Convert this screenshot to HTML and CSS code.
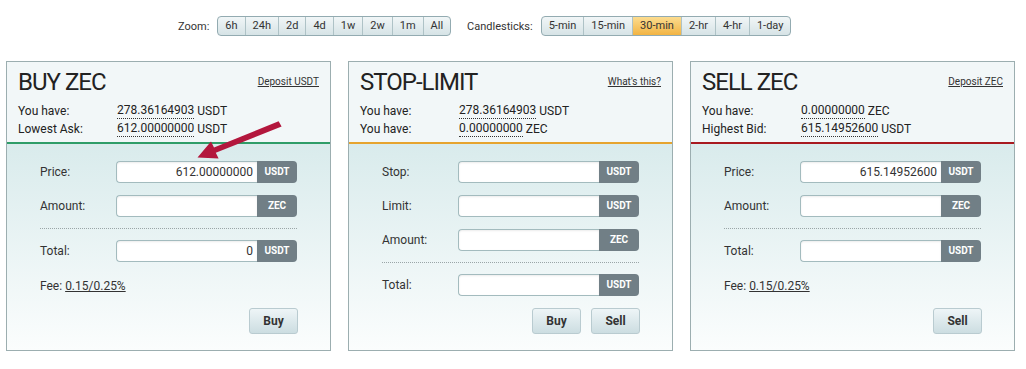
FILE: index.html
```html
<!doctype html>
<html lang="en">
<head>
  <meta charset="UTF-8">
  <title>Trade ZEC</title>
  <link rel="stylesheet" href="styles.css">
</head>
<body>
  <div class="toolbar">
    <span class="tb-label">Zoom:</span>
    <ul class="btn-group">
      <li>6h</li><li>24h</li><li>2d</li><li>4d</li><li>1w</li><li>2w</li><li>1m</li><li>All</li>
    </ul>
    <span class="tb-label">Candlesticks:</span>
    <ul class="btn-group">
      <li>5-min</li><li>15-min</li><li class="on">30-min</li><li>2-hr</li><li>4-hr</li><li>1-day</li>
    </ul>
  </div>

  <div class="panels">
    <!-- buy -->
    <div class="panel">
      <div class="head buy">
        <div class="title-row">
          <h2>BUY ZEC</h2>
          <a href="#">Deposit USDT</a>
        </div>
        <div class="info"><span class="lbl">You have:</span><span class="val">278.36164903</span>&nbsp;USDT</div>
        <div class="info"><span class="lbl">Lowest Ask:</span><span class="val">612.00000000</span>&nbsp;USDT</div>
      </div>
      <div class="body">
        <div class="row"><label>Price:</label><div class="field"><input type="text" value="612.00000000"><span class="unit">USDT</span></div></div>
        <div class="row"><label>Amount:</label><div class="field"><input type="text" value=""><span class="unit">ZEC</span></div></div>
        <div class="sep"></div>
        <div class="row"><label>Total:</label><div class="field"><input type="text" value="0"><span class="unit">USDT</span></div></div>
        <div class="fee">Fee: <a href="#">0.15/0.25%</a></div>
        <div class="actions"><button>Buy</button></div>
      </div>
    </div>

    <!-- stop-limit -->
    <div class="panel">
      <div class="head stop">
        <div class="title-row">
          <h2>STOP-LIMIT</h2>
          <a href="#">What's this?</a>
        </div>
        <div class="info"><span class="lbl">You have:</span><span class="val">278.36164903</span>&nbsp;USDT</div>
        <div class="info"><span class="lbl">You have:</span><span class="val">0.00000000</span>&nbsp;ZEC</div>
      </div>
      <div class="body">
        <div class="row"><label>Stop:</label><div class="field"><input type="text" value=""><span class="unit">USDT</span></div></div>
        <div class="row"><label>Limit:</label><div class="field"><input type="text" value=""><span class="unit">USDT</span></div></div>
        <div class="row"><label>Amount:</label><div class="field"><input type="text" value=""><span class="unit">ZEC</span></div></div>
        <div class="sep"></div>
        <div class="row"><label>Total:</label><div class="field"><input type="text" value=""><span class="unit">USDT</span></div></div>
        <div class="actions"><button>Buy</button><button>Sell</button></div>
      </div>
    </div>

    <!-- sell -->
    <div class="panel">
      <div class="head sell">
        <div class="title-row">
          <h2>SELL ZEC</h2>
          <a href="#">Deposit ZEC</a>
        </div>
        <div class="info"><span class="lbl">You have:</span><span class="val">0.00000000</span>&nbsp;ZEC</div>
        <div class="info"><span class="lbl">Highest Bid:</span><span class="val">615.14952600</span>&nbsp;USDT</div>
      </div>
      <div class="body">
        <div class="row"><label>Price:</label><div class="field"><input type="text" value="615.14952600"><span class="unit">USDT</span></div></div>
        <div class="row"><label>Amount:</label><div class="field"><input type="text" value=""><span class="unit">ZEC</span></div></div>
        <div class="sep"></div>
        <div class="row"><label>Total:</label><div class="field"><input type="text" value=""><span class="unit">USDT</span></div></div>
        <div class="fee">Fee: <a href="#">0.15/0.25%</a></div>
        <div class="actions"><button>Sell</button></div>
      </div>
    </div>
  </div>

  <svg class="arrow" width="100" height="50" viewBox="190 115 100 50">
    <polygon fill="#b3173d" points="278.6,121.2 214,147.6 211,141.6 197.5,157.5 218.6,158.6 215.8,152.8 281.6,126.6"/>
  </svg>
</body>
</html>
```

FILE: styles.css
```css
*{margin:0;
  padding:0;
  list-style:none;
  box-sizing:border-box;}
body{font-family:Roboto,"Liberation Sans",sans-serif;
     color:#333;
     background:#fff;
     position:relative;}

/* top toolbar */
.toolbar{display:flex;
         align-items:center;
         padding:16px 0 0 178px;
         height:36px;
         font-size:11px;}
.tb-label{margin-right:8px;}
.btn-group{display:flex;
           height:20px;
           margin-right:16px;
           border:1px solid #93abb1;
           border-radius:4px;
           overflow:hidden;
           background:linear-gradient(#f1f6f7,#d6e3e6);}
.btn-group li{padding:0 7px;
              line-height:18px;
              border-left:1px solid #aec2c6;}
.btn-group li:first-child{border-left:none;}
.btn-group .on{background:linear-gradient(#fcdc8f,#f2b444);}

/* panels */
.panels{display:flex;
        gap:17px;
        padding:25px 0 0 6px;}
.panel{width:325px;
       height:290px;
       border:1px solid #9caeb0;
       display:flex;
       flex-direction:column;}
.head{height:82px;
      background:#f2f7f8;
      padding:6px 11px 0 11px;
      border-bottom:2px solid #2f9d68;}
.head.stop{border-bottom-color:#e6a42f;}
.head.sell{border-bottom-color:#a81a20;}
.title-row{display:flex;
           justify-content:space-between;
           align-items:center;
           height:28px;
           margin-bottom:6px;}
.title-row h2{font-size:24px;
              font-weight:400;
              line-height:28px;
              color:#222;
              letter-spacing:-1px;}
.title-row a{font-size:10px;
             line-height:12px;
             color:#333;}
.info{font-size:12px;
      line-height:18px;
      color:#222;
      display:flex;}
.info .lbl{width:99px;}
.info .val{border-bottom:1px dotted #333;
           line-height:16px;
           height:17px;}

.body{flex:1;
      padding:17px 31px 0 33px;
      background:linear-gradient(#d9ebec,#fbfdfd);}
.row{display:flex;
     align-items:center;
     height:22px;
     margin-bottom:12px;
     font-size:12px;}
.row label{width:76px;}
.field{display:flex;
       height:22px;}
.field input{width:141px;
             height:22px;
             border:1px solid #a3bbbe;
             border-right:none;
             border-radius:4px 0 0 4px;
             background:#fff;
             box-shadow:inset 0 1px 2px rgba(0,0,0,0.08);
             text-align:right;
             padding-right:4px;
             font-family:inherit;
             font-size:12px;
             color:#333;
             outline:none;}
.field .unit{width:40px;
             background:#717f86;
             color:#fff;
             font-size:10px;
             font-weight:700;
             line-height:22px;
             text-align:center;
             border-radius:0 4px 4px 0;}
.sep{height:1px;
     border-top:1px dotted #9aa5a7;
     margin:-1px 0 11px 0;
     width:257px;}
.fee{font-size:12px;
     line-height:18px;
     margin:15px 0 13px;}
.fee a{color:#333;}
.actions{display:flex;
         justify-content:flex-end;
         gap:10px;
         width:258px;}
.actions button{width:49px;
                height:26px;
                border:1px solid #b9cbd0;
                border-radius:3px;
                background:linear-gradient(#eef5f7,#ccdde1);
                font-family:inherit;
                font-size:12px;
                font-weight:700;
                color:#333;}

/* annotation arrow over the buy panel */
.arrow{position:absolute;
       left:190px;
       top:115px;}
```
